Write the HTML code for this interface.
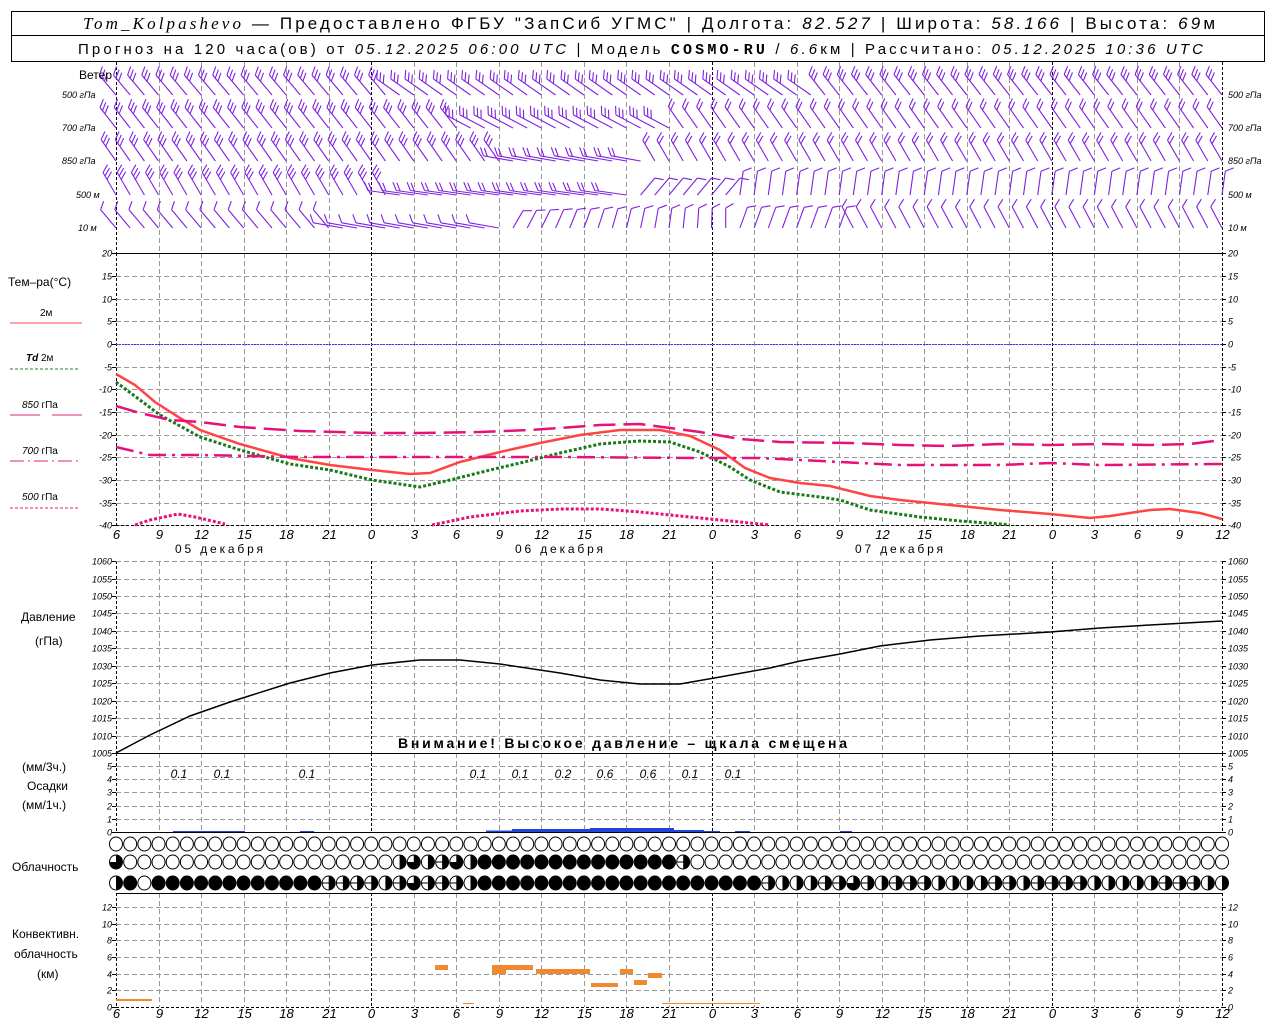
<!DOCTYPE html>
<html><head><meta charset="utf-8">
<style>
html,body{margin:0;padding:0;background:#fff;}
svg{display:block;}
text{font-family:"Liberation Sans",sans-serif;}
.ax{font-size:9px;font-style:italic;}
.lb{font-size:12px;}
</style></head><body>
<svg id="s" width="1280" height="1024" viewBox="0 0 1280 1024" xmlns="http://www.w3.org/2000/svg">
<rect x="0" y="0" width="1280" height="1024" fill="#fff"/>
<g id="grid"></g>
<g id="wind"></g>
<g id="curves"></g>
<g id="clouds"></g>
<rect x="11.5" y="11.5" width="1253" height="50" fill="none" stroke="#000"/>
<line x1="11" y1="35.5" x2="1265" y2="35.5" stroke="#000"/>
<text x="83" y="29" font-size="17" textLength="1132" lengthAdjust="spacing"><tspan font-family="Liberation Serif" font-style="italic">Tom_Kolpashevo</tspan> — Предоставлено ФГБУ "ЗапСиб УГМС" | Долгота: <tspan font-style="italic">82.527</tspan> | Широта: <tspan font-style="italic">58.166</tspan> | Высота: <tspan font-style="italic">69</tspan>м</text>
<text x="78" y="54" font-size="15" textLength="1125" lengthAdjust="spacing">Прогноз на 120 часа(ов) от <tspan font-style="italic">05.12.2025 06:00 UTC</tspan> | Модель <tspan font-family="Liberation Mono" font-weight="bold">COSMO-RU</tspan> / <tspan font-style="italic">6.6</tspan>км | Рассчитано: <tspan font-style="italic">05.12.2025 10:36 UTC</tspan></text>
<g class="lb">
<text x="112" y="79" text-anchor="end">Ветер</text>
<text x="8" y="286" font-size="12">Тем–ра(°С)</text>
<text x="40" y="316" font-size="10">2м</text>
<text x="26" y="361" font-size="10"><tspan font-style="italic" font-weight="bold">Td</tspan>  2м</text>
<text x="22" y="408" font-size="10"><tspan font-style="italic">850</tspan> гПа</text>
<text x="22" y="454" font-size="10"><tspan font-style="italic">700</tspan> гПа</text>
<text x="22" y="500" font-size="10"><tspan font-style="italic">500</tspan> гПа</text>
<text x="21" y="621">Давление</text>
<text x="35" y="645">(гПа)</text>
<text x="22" y="771">(мм/3ч.)</text>
<text x="27" y="790">Осадки</text>
<text x="22" y="809">(мм/1ч.)</text>
<text x="12" y="871">Облачность</text>
<text x="12" y="938">Конвективн.</text>
<text x="14" y="958">облачность</text>
<text x="37" y="978">(км)</text>
<text x="175" y="553" textLength="88" lengthAdjust="spacing">05 декабря</text>
<text x="515" y="553" textLength="88" lengthAdjust="spacing">06 декабря</text>
<text x="855" y="553" textLength="88" lengthAdjust="spacing">07 декабря</text>
<text x="398" y="748" font-size="14" font-weight="bold" textLength="449" lengthAdjust="spacing">Внимание! Высокое давление – щкала смещена</text>
</g>
<line x1="10" y1="323" x2="82" y2="323" stroke="#f44" stroke-width="1"/>
<line x1="10" y1="369" x2="78" y2="369" stroke="#2a7a2a" stroke-dasharray="3,2"/>
<line x1="10" y1="415" x2="40" y2="415" stroke="#e0207a"/><line x1="52" y1="415" x2="82" y2="415" stroke="#e0207a"/>
<line x1="10" y1="461" x2="82" y2="461" stroke="#e0207a" stroke-dasharray="14,4,2,4"/>
<line x1="10" y1="508" x2="78" y2="508" stroke="#e0207a" stroke-dasharray="3,2"/>
<g class="ax" font-size="10">
<text x="62" y="98">500 гПа</text><text x="62" y="131">700 гПа</text><text x="62" y="164">850 гПа</text><text x="76" y="198">500 м</text><text x="78" y="231">10   м</text>
<text x="1228" y="98">500 гПа</text><text x="1228" y="131">700 гПа</text><text x="1228" y="164">850 гПа</text><text x="1228" y="198">500 м</text><text x="1228" y="231">10   м</text>
</g>
<g id="txt" class="ax"></g>
<g font-size="12" font-style="italic">
<text x="179" y="778" text-anchor="middle">0.1</text><text x="222" y="778" text-anchor="middle">0.1</text><text x="307" y="778" text-anchor="middle">0.1</text>
<text x="478" y="778" text-anchor="middle">0.1</text><text x="520" y="778" text-anchor="middle">0.1</text><text x="563" y="778" text-anchor="middle">0.2</text>
<text x="605" y="778" text-anchor="middle">0.6</text><text x="648" y="778" text-anchor="middle">0.6</text><text x="690" y="778" text-anchor="middle">0.1</text><text x="733" y="778" text-anchor="middle">0.1</text>
</g>
</svg>
<script>
var NS="http://www.w3.org/2000/svg";
function el(p,t,a){var e=document.createElementNS(NS,t);for(var k in a)e.setAttribute(k,a[k]);p.appendChild(e);return e;}
function X(h){return 116+h*1106/78;}
var G=document.getElementById("grid"),T=document.getElementById("txt");
var panels=[[62,253],[253,525],[561,753],[753,832],[893,1007]];
for(var k=0;k<=26;k++){var x=Math.round(X(3*k))+0.5,hr=(6+3*k)%24;
 panels.forEach(function(p){var d=(hr==0||k==0||k==26);el(G,"line",{x1:x,y1:p[0],x2:x,y2:p[1],stroke:d?"#000":"#999","stroke-dasharray":d?"3,2":"5,3"});});
 [535,1014].forEach(function(y){var t=el(T,"text",{x:x,y:y+4,"text-anchor":"middle","font-size":"13"});t.textContent=hr;});
}
function hgrid(vals,yf,nolineFirst){vals.forEach(function(v,i){var y=Math.round(yf(v))+0.5;
 if(!(nolineFirst&&i==0))el(G,"line",{x1:116,y1:y,x2:1222,y2:y,stroke:"#999","stroke-dasharray":"5,3"});
 el(G,"line",{x1:112,y1:y,x2:116,y2:y,stroke:"#000"});el(G,"line",{x1:1222,y1:y,x2:1226,y2:y,stroke:"#000"});
 var t=el(T,"text",{x:112,y:y+3,"text-anchor":"end"});t.textContent=v;
 var t2=el(T,"text",{x:1228,y:y+3});t2.textContent=v;});}
var tv=[];for(var v=20;v>=-40;v-=5)tv.push(v);
function YT(v){return 344-v*4.533;}
hgrid(tv,YT);
var pv=[];for(var v=1060;v>=1005;v-=5)pv.push(v);
function YP(v){return 753-(v-1005)*3.49;}
hgrid(pv,YP);
function YR(v){return 832-v*13.2;}
hgrid([0,1,2,3,4,5],YR,true);
function YC(v){return 1007-v*8.33;}
hgrid([0,2,4,6,8,10,12],YC,true);
el(G,"line",{x1:116,y1:344.5,x2:1222,y2:344.5,stroke:"#33f","stroke-dasharray":"2,1"});
[253.5,753.5,832.5,893.5].forEach(function(y){el(G,"line",{x1:116,y1:y,x2:1222,y2:y,stroke:"#000"});});
[525.5,1007.5].forEach(function(y){el(G,"line",{x1:116,y1:y,x2:1222,y2:y,stroke:"#000","stroke-dasharray":"3,2"});});
var C=document.getElementById("curves");
function pl(pts,st){el(C,"polyline",Object.assign({points:pts.map(function(p){return p.join(",");}).join(" "),fill:"none"},st));}
pl([[116,374],[135,385],[155,402],[180,418],[200,430],[240,444],[290,458],[330,465],[372,470],[410,474],[430,473],[460,462],[500,452],[540,443],[580,435],[620,430],[660,430],[690,436],[720,450],[745,468],[770,478],[800,483],[830,486],[870,496],[900,500],[950,505],[1000,510],[1050,514],[1090,518],[1110,516],[1150,510],[1170,509],[1200,513],[1222,519]],{stroke:"#f44","stroke-width":2.5});
pl([[116,382],[140,400],[160,415],[200,437],[240,450],[290,464],[330,470],[372,480],[420,487],[450,480],[490,470],[520,463],[560,453],[600,444],[640,441],[670,442],[700,452],[730,467],[750,480],[780,492],[820,497],[840,500],[870,510],[920,517],[960,521],[1000,524],[1010,525]],{stroke:"#1a7a1a","stroke-width":3,"stroke-dasharray":"3,2"});
pl([[116,406],[140,413],[170,420],[200,422],[240,427],[300,431],[372,433],[420,433],[480,432],[530,430],[560,428],[600,425],[640,424],[670,428],[700,432],[740,439],[780,442],[850,443],[900,445],[950,446],[1000,444],[1050,445],[1100,444],[1150,445],[1190,444],[1222,440]],{stroke:"#e8107a","stroke-width":2.5,"stroke-dasharray":"22,8"});
pl([[116,447],[150,455],[200,455],[300,457],[420,457],[560,457],[700,458],[760,458],[800,460],[900,465],[1000,465],[1050,463],[1100,465],[1222,464]],{stroke:"#e8107a","stroke-width":2.5,"stroke-dasharray":"18,6,3,6"});
pl([[135,525],[150,520],[178,514],[195,517],[225,524]],{stroke:"#e8107a","stroke-width":3,"stroke-dasharray":"3,2"});
pl([[432,525],[470,517],[520,511],[560,509],[600,509],[640,512],[700,518],[740,522],[770,525]],{stroke:"#e8107a","stroke-width":3,"stroke-dasharray":"3,2"});
pl([[116,753],[150,735],[190,716],[230,702],[290,683],[330,673],[372,665],[420,660],[460,660],[500,664],[560,673],[600,680],[640,684],[680,684],[720,677],[770,668],[800,661],[840,654],[880,646],[930,640],[980,636],[1050,632],[1100,628],[1150,625],[1222,621]],{stroke:"#000","stroke-width":1.5});
[[173,245,1],[300,314,1],[486,512,1.5],[512,590,3],[590,674,4],[674,704,2],[704,720,1],[735,750,1],[840,852,1]].forEach(function(b){el(C,"rect",{x:b[0],y:832-b[2],width:b[1]-b[0],height:b[2],fill:"#2244dd"});});
[[116,152,999,2],[435,448,965,5],[492,506,965,9],[506,533,965,5],[536,548,969,5],[548,590,969,5],[591,618,983,4],[620,633,969,5],[634,647,980,5],[648,662,973,5],[463,474,1003,1],[662,760,1003,1]].forEach(function(b){el(C,"rect",{x:b[0],y:b[2],width:b[1]-b[0],height:b[3],fill:"#f08a30"});});
var CL=document.getElementById("clouds");
function circ(cx,cy,t){var r=6.5;
 if(t==4){el(CL,"ellipse",{cx:cx,cy:cy,rx:r,ry:7,fill:"#000",stroke:"#000"});return;}
 el(CL,"ellipse",{cx:cx,cy:cy,rx:r,ry:7,fill:"#fff",stroke:"#000"});
 if(t==0)return;
 if(t==2){el(CL,"path",{d:"M"+cx+","+(cy-7)+" A"+r+",7 0 0 1 "+cx+","+(cy+7)+"Z",fill:"#000"});}
 if(t==3){el(CL,"path",{d:"M"+cx+","+(cy-7)+" A"+r+",7 0 1 1 "+(cx-r)+","+cy+" L"+cx+","+cy+"Z",fill:"#000"});}
 if(t==1){el(CL,"path",{d:"M"+cx+","+(cy-7)+" A"+r+",7 0 0 1 "+(cx+r)+","+cy+" L"+cx+","+cy+"Z",fill:"#000"});}
 if(t==5){el(CL,"path",{d:"M"+cx+","+(cy-7)+" A"+r+",7 0 0 1 "+cx+","+(cy+7)+"Z",fill:"#000"});el(CL,"line",{x1:cx-r,y1:cy,x2:cx+r,y2:cy,stroke:"#000"});}
}
for(var h=0;h<=78;h++){var x=X(h);
 circ(x,844,0);
 var t2=0;if(h==0)t2=3;else if(h>=20&&h<=25)t2=[2,3,2,5,3,2][h-20];else if(h>25&&h<=39)t2=4;else if(h==40)t2=5;circ(x,862,t2);
 var t3;if(h==0)t3=2;else if(h==1)t3=4;else if(h==2)t3=0;else if(h<=14)t3=4;else if(h<=26)t3=[5,5,5,5,2,5,3,5,5,5,2,4][h-15];else if(h<=45)t3=4;else t3=[5,2,2,2,5,5,3,5,2,5,5,5,2,2,2,2,5,5,2,5,5,5,5,2,2,2,2,2,5,5,5,2,2][(h-46)%33];circ(x,883,t3);}
var W=document.getElementById("wind");
var rows=[
 {y:95,f:function(h){return h<20?[40,3,26]:h<50?[55,3,28]:[38,3,26];}},
 {y:128,f:function(h){return h<25?[38,3,26]:h<40?[62,3,28]:[35,2,26];}},
 {y:161,f:function(h){return h<28?[35,3,26]:h<38?[80,2,30]:[30,2,24];}},
 {y:195,f:function(h){return h<20?[30,3,26]:h<37?[82,2,32]:h<44?[-40,1,22]:[-8,1,24];}},
 {y:228,f:function(h){return h<16?[40,1,24]:h<28?[80,1,30]:h<44?[-30+(h-28)*2,1,20]:h<52?[-20,1,22]:[28,1,24];}}];
rows.forEach(function(r){for(var h=0;h<=78;h++){var p=r.f(h),a=p[0]*Math.PI/180,L=p[2];var x0=X(h),y0=r.y;
 var ux=-Math.sin(a),uy=-Math.cos(a);var x1=x0+ux*L,y1=y0+uy*L;
 el(W,"line",{x1:x0.toFixed(1),y1:y0,x2:x1.toFixed(1),y2:y1.toFixed(1),stroke:"#8020e0","stroke-width":1.1});
 var th=60*Math.PI/180,c=Math.cos(th),s=Math.sin(th);
 var fx=ux*c-uy*s,fy=ux*s+uy*c;
 for(var i=0;i<p[1];i++){var bx=x1-ux*i*4,by=y1-uy*i*4;
  el(W,"line",{x1:bx.toFixed(1),y1:by.toFixed(1),x2:(bx+fx*9).toFixed(1),y2:(by+fy*9).toFixed(1),stroke:"#8020e0","stroke-width":1.1});}
}});
</script>
</body></html>
